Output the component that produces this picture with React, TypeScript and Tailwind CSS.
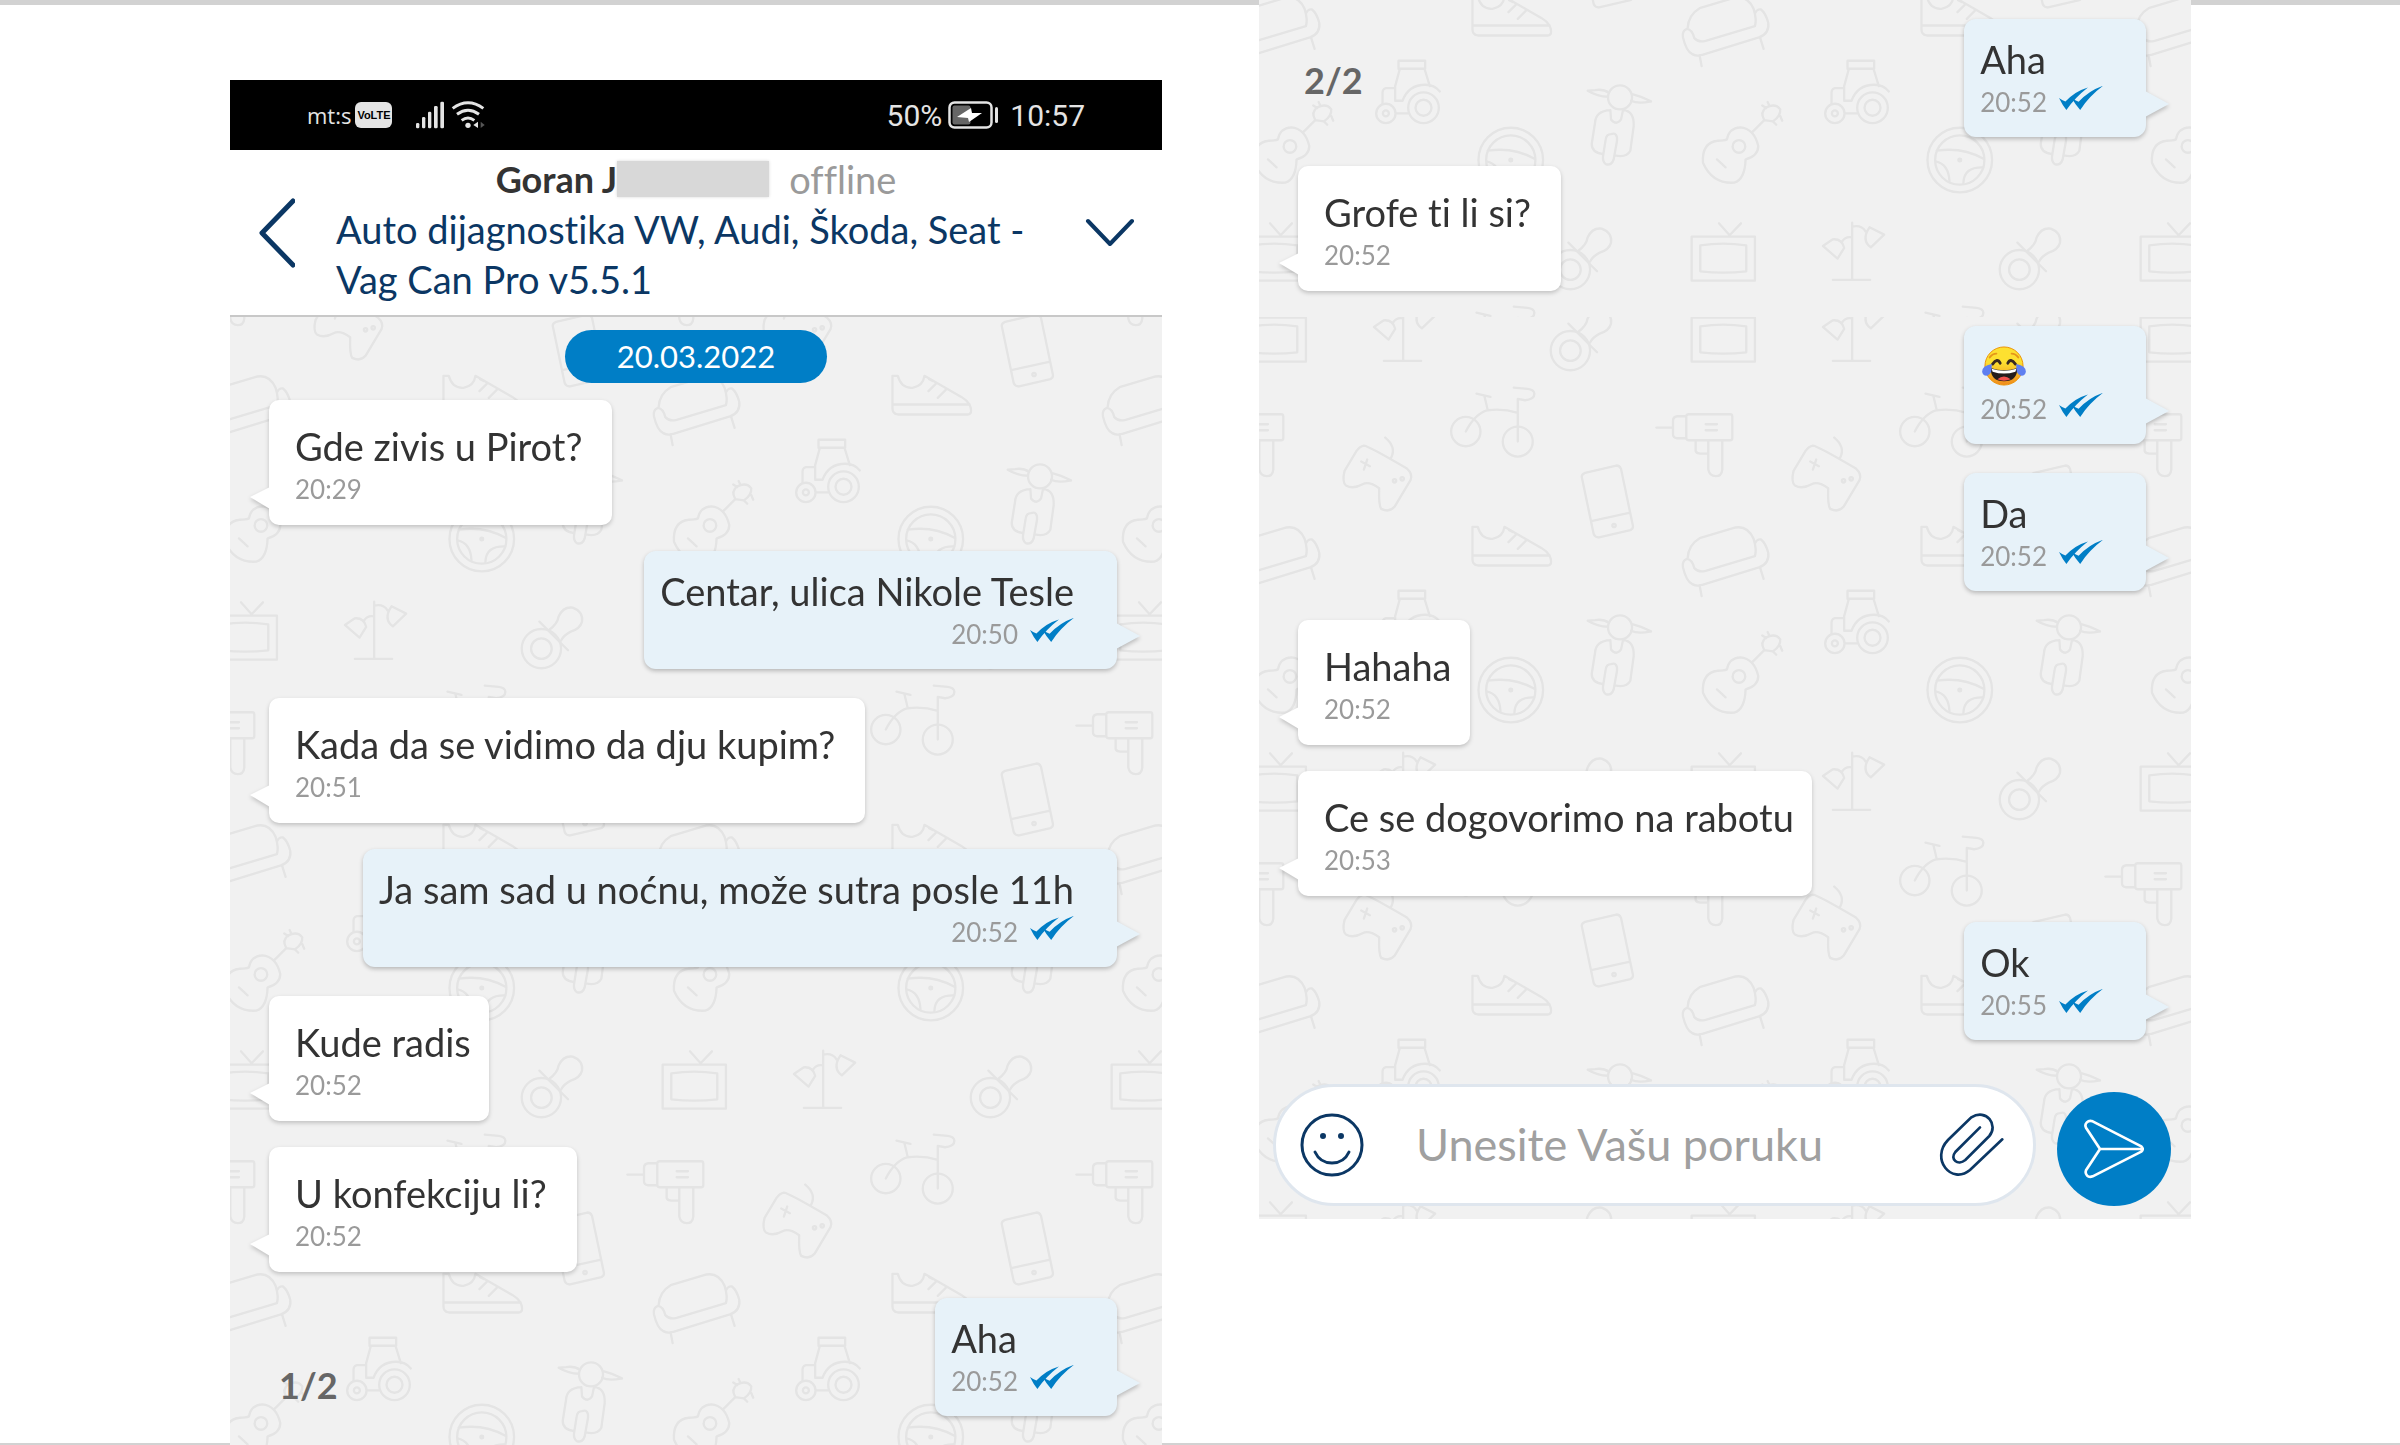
import { useId } from "react";
import type { ReactNode } from "react";

type Message = {
    from: "me" | "them";
    text: string;
    time: string;
    emoji?: boolean;
};

const firstMessages: Message[] = [
    { from: "them", text: "Gde zivis u Pirot?", time: "20:29" },
    { from: "me", text: "Centar, ulica Nikole Tesle", time: "20:50" },
    { from: "them", text: "Kada da se vidimo da dju kupim?", time: "20:51" },
    { from: "me", text: "Ja sam sad u noćnu, može sutra posle 11h", time: "20:52" },
    { from: "them", text: "Kude radis", time: "20:52" },
    { from: "them", text: "U konfekciju li?", time: "20:52" },
];

const secondMessages: Message[] = [
    { from: "me", text: "😂", time: "20:52", emoji: true },
    { from: "me", text: "Da", time: "20:52" },
    { from: "them", text: "Hahaha", time: "20:52" },
    { from: "them", text: "Ce se dogovorimo na rabotu", time: "20:53" },
    { from: "me", text: "Ok", time: "20:55" },
];

/* Repeating doodle wallpaper. The drawings use a 1348 unit tile, three units to a pixel */
function Wallpaper({ y }: { y: number }) {
    const id = useId();
    return (
        <svg className="absolute inset-0 h-full w-full" aria-hidden="true">
            <defs>
                <pattern
                    id={id}
                    width="449"
                    height="449"
                    patternUnits="userSpaceOnUse"
                    x="395"
                    y={y}
                    viewBox="-45 0 1348 1348"
                >
                    <g fill="none" stroke="#e4e4e4" strokeWidth="7" strokeLinejoin="round" strokeLinecap="round">
                        {/* tv */}
                        <path d="M68 74H258V206H68ZM94 100Q163 90 232 100V178Q163 186 94 178ZM150 34L182 70L216 34" />
                        {/* lamp */}
                        <path d="M550 32V204M492 204H604M550 76Q530 72 520 88M550 44Q578 38 590 58M462 102L492 82Q520 80 526 108L506 140ZM602 46L646 68L606 106Q576 84 602 46Z" />
                        {/* pacifier */}
                        <circle cx="1052" cy="173" r="59" />
                        <circle cx="1052" cy="173" r="31" />
                        <path d="M1046 92L1132 178M1074 118Q1100 100 1104 76Q1118 46 1146 50Q1178 62 1174 92Q1168 114 1140 122Q1120 132 1110 150" />
                        {/* drill */}
                        <path d="M-38 404H12M52 370H24Q12 372 12 384V424Q12 434 24 436H52M60 364H184Q190 364 190 370V436Q190 442 184 442H60Q52 442 52 436V370Q52 364 60 364ZM110 394H144M110 412H144M80 444V474Q82 482 94 482H118M118 444V530Q122 550 140 550Q158 550 160 530V444" />
                        {/* tricycle */}
                        <circle cx="738" cy="416" r="44" />
                        <circle cx="894" cy="446" r="45" />
                        <path d="M738 416Q766 362 804 352Q850 346 894 360M770 302L812 312M794 310L804 352M894 446V318L916 322Q944 320 944 302Q942 290 924 288L882 284" />
                        {/* gamepad */}
                        <path d="M432 458Q444 458 560 526Q580 544 572 562L524 642Q508 660 484 648Q476 636 478 586Q448 564 428 574Q400 590 378 578Q366 566 374 534L410 474Q420 460 432 458ZM496 434Q530 462 514 494M424 506L450 520M442 500L432 530" />
                        <circle cx="524" cy="564" r="5" />
                        <circle cx="547" cy="558" r="5" />
                        {/* phone */}
                        <path d="M1096 540L1190 518Q1200 518 1204 528L1240 700Q1240 708 1232 712L1138 734Q1126 734 1122 724L1086 552Q1086 544 1096 540ZM1118 684L1228 660" />
                        <circle cx="1183" cy="698" r="5" />
                        {/* sofa */}
                        <path d="M56 796Q58 756 92 736L200 704Q236 698 254 738Q264 770 258 790L110 834Q88 840 76 826Q70 800 54 798Q38 804 42 824Q52 866 70 874Q84 882 100 876L270 824Q302 812 298 780Q290 750 276 740Q264 738 258 752M92 878L98 910M274 826L284 858" />
                        {/* shoe */}
                        <path d="M758 702L774 702Q784 740 818 738Q850 732 854 702L966 766Q994 784 994 806Q994 818 984 818H774Q758 816 758 800ZM758 788H990M888 726L866 748M918 744L894 768M868 712L880 718" />
                        {/* tractor */}
                        <path d="M536 894H616V918H536ZM540 918L526 970V1014H548M614 918L630 970M526 976H498Q488 978 488 990V1024M548 1014Q566 966 616 966Q644 966 660 986M530 1052H566" />
                        <circle cx="498" cy="1052" r="29" />
                        <circle cx="498" cy="1052" r="9" />
                        <circle cx="611" cy="1035" r="46" />
                        <circle cx="611" cy="1035" r="24" />
                        {/* scooter */}
                        <circle cx="1201" cy="1004" r="36" />
                        <path d="M1104 984L1126 982Q1150 978 1168 990M1104 984Q1134 1002 1164 1002M1237 994Q1262 1000 1294 1016M1234 1014Q1254 1024 1294 1016M1172 1042Q1128 1044 1126 1080L1116 1144Q1116 1170 1150 1174M1172 1042L1174 1070Q1190 1090 1204 1070L1210 1042Q1244 1044 1242 1090L1232 1164Q1220 1186 1186 1178M1174 1114Q1194 1108 1192 1134L1182 1190Q1176 1210 1158 1204Q1148 1196 1150 1180L1158 1130Q1160 1114 1174 1114Z" />
                        {/* guitar */}
                        <circle cx="210" cy="1151" r="19" />
                        <path d="M174 1130Q180 1096 214 1094Q256 1098 268 1150Q268 1180 230 1190Q228 1250 196 1260Q130 1264 102 1200Q98 1140 146 1134Q166 1134 174 1130ZM144 1190L170 1214M250 1108L286 1072M286 1072Q272 1048 292 1034Q320 1020 334 1040Q336 1060 312 1076ZM280 1028L292 1036M296 1018L302 1030M334 1060L340 1074M312 1076L322 1086" />
                        {/* steering wheel */}
                        <circle cx="873" cy="1192" r="97" />
                        <circle cx="873" cy="1192" r="74" />
                        <circle cx="873" cy="1192" r="4" />
                        <path d="M804 1164Q880 1152 944 1188M800 1196Q840 1204 842 1256M944 1214Q884 1212 884 1262" />
                    </g>
                </pattern>
            </defs>
            <rect width="100%" height="100%" fill={`url(#${id})`} />
        </svg>
    );
}

function DoubleCheck() {
    return (
        <svg className="h-6 w-11 shrink-0" viewBox="469 114 137 74" fill="#007ec6" role="img" aria-label="Pročitano">
            <path d="M469 151Q480 159 489 162Q518 130 559 118Q518 150 492 188Q480 174 469 151Z" />
            <path d="M508 150Q520 159 530 163Q562 128 606 113Q562 146 535 188Q520 172 508 150Z" />
        </svg>
    );
}

function JoyFace() {
    return (
        <svg className="h-10 w-12" viewBox="0 0 48 42" role="img" aria-label="😂">
            <defs>
                <linearGradient id="joy" x1="0" y1="0" x2="0" y2="1">
                    <stop offset="0.4" stopColor="#fde030" />
                    <stop offset="1" stopColor="#f08a1c" />
                </linearGradient>
            </defs>
            <circle cx="24" cy="21" r="20" fill="url(#joy)" stroke="#eb8f00" />
            <path d="M9 12Q12 8 16 8M39 12Q36 8 32 8" fill="none" stroke="#e5961a" strokeWidth="2" strokeLinecap="round" />
            <path d="M12 19Q17 12 20 18M28 18Q31 12 36 19" fill="none" stroke="#3a2a20" strokeWidth="3" strokeLinecap="round" />
            <path d="M10 23Q24 28 38 23Q38 37 24 37Q10 37 10 23Z" fill="#241c1c" />
            <path d="M11 24Q24 28 37 24L36 27Q24 31 12 27Z" fill="#fff" />
            <path d="M17 35Q24 29 31 35Q24 38 17 35Z" fill="#f0504d" />
            <path d="M11 19Q12 29 7 31Q2 32 1 27Q1 21 11 19ZM37 19Q36 29 41 31Q46 32 47 27Q47 21 37 19Z" fill="#5f7ff0" />
        </svg>
    );
}

function Bubble({ message }: { message: Message }) {
    if (message.from === "them") {
        return (
            <div
                className={`relative w-fit self-start rounded-[10px] bg-white pt-[21px] pb-[18px] pl-[26px] drop-shadow-[0_2px_2px_rgba(0,0,0,0.2)] ${
                    message.text.endsWith("?") ? "pr-[30px]" : "pr-[18px]"
                }`}
            >
                <p className="text-[38px] leading-[50px] text-[#333]">{message.text}</p>
                <p className="text-[26px] leading-9 text-[#9a9a9a]">{message.time}</p>
                <svg className="absolute bottom-4 -left-[19px] h-[22px] w-5" viewBox="0 0 20 22" fill="#fff" aria-hidden="true">
                    <path d="M20 0V22L0 10Z" />
                </svg>
            </div>
        );
    }
    return (
        <div className="relative mb-[3px] flex w-fit flex-col self-end rounded-xl bg-[#e7f2f9] pt-[15px] pr-[43px] pb-[17px] pl-4 drop-shadow-[0_2px_2px_rgba(0,0,0,0.24)]">
            <div className="flex h-[50px] items-center text-[38px] leading-[50px] text-[#333]">
                {message.emoji ? <JoyFace /> : <p>{message.text}</p>}
            </div>
            <div className="flex items-start gap-3 self-end">
                <p className="text-[26px] leading-9 text-[#9a9a9a]">{message.time}</p>
                <span className="pt-0.5">
                    <DoubleCheck />
                </span>
            </div>
            <svg className="absolute -right-[23px] bottom-5 h-[26px] w-6" viewBox="0 0 24 26" fill="#e7f2f9" aria-hidden="true">
                <path d="M0 0V26L24 13Z" />
            </svg>
        </div>
    );
}

function Thread({ messages, children }: { messages: Message[]; children?: ReactNode }) {
    return (
        <div className="relative flex flex-col gap-[26px] pr-[45px] pl-[39px]">
            {messages.map((message, index) => (
                <Bubble key={index} message={message} />
            ))}
            {children}
        </div>
    );
}

function StatusBar() {
    return (
        <div className="flex h-[70px] items-center bg-black px-[77px] font-[Roboto,sans-serif] text-[#e4e4e4]">
            <span className="font-['Open_Sans',sans-serif] text-[22px]">mt:s</span>
            <span className="ml-1 flex h-[26px] w-[37px] items-center justify-center rounded-md bg-[#e4e4e4] font-['Liberation_Sans_Narrow','Liberation_Sans',sans-serif] text-[11px] font-bold text-black">
                VoLTE
            </span>
            <svg className="ml-6 h-7 w-[70px]" viewBox="384 32 210 84" fill="#e4e4e4" aria-hidden="true">
                <rect x="384" y="98" width="10" height="16" rx="4" />
                <rect x="402" y="80" width="10" height="34" rx="4" />
                <rect x="420" y="64" width="10" height="50" rx="4" />
                <rect x="438" y="47" width="11" height="67" rx="4" />
                <rect x="457" y="34" width="11" height="80" rx="4" />
                <g fill="none" stroke="#e4e4e4" strokeWidth="9">
                    <path d="M494 54Q540 20 586 54M507 72Q540 48 573 72M521 90Q540 76 559 90" />
                </g>
                <circle cx="540" cy="105" r="8" />
                <path d="M556 104L570 94V113Z" />
                <path d="M590 104L578 94V113Z" fill="#555" />
            </svg>
            <span className="ml-auto text-[30px]">50%</span>
            <svg className="ml-1.5 h-7 w-[52px]" viewBox="0 0 52 28" aria-hidden="true">
                <rect x="1.5" y="1.5" width="42" height="25" rx="5" fill="none" stroke="#e4e4e4" strokeWidth="2.5" />
                <rect x="4.5" y="4.5" width="18" height="19" rx="2" fill="#666" />
                <path d="M9 16L23 7L24 12L34 12L21 21L20 17Z" fill="#fff" />
                <rect x="47" y="6" width="3" height="16" rx="1.5" fill="#e4e4e4" />
            </svg>
            <span className="ml-2.5 text-[30px]">10:57</span>
        </div>
    );
}

function ChatHeader() {
    return (
        <header className="relative border-b-2 border-[#c8c8c8] bg-white pt-1 pb-[11px]">
            <div className="flex h-[50px] items-center justify-center text-[38px] leading-[50px]">
                <h1 className="text-4xl font-bold text-[#333]">Goran J</h1>
                <span className="h-9 w-[152px] bg-[#d8d8d8] shadow-[0_0_3px_#d8d8d8]" />
                <span className="ml-5 text-[#9a9a9a]">offline</span>
            </div>
            <div className="flex items-start">
                <button type="button" aria-label="Nazad" className="-mt-1.5 ml-[29px] flex w-[77px]">
                    <svg className="h-[70px] w-9" viewBox="0 0 36 70" fill="none" stroke="#0b3764" strokeWidth="5" strokeLinecap="round" strokeLinejoin="round">
                        <path d="M34 3L3 35L34 67" />
                    </svg>
                </button>
                <h2 className="flex-1 text-[38px] leading-[50px] text-[#0b3764]">
                    Auto dijagnostika VW, Audi, Škoda, Seat - Vag Can Pro v5.5.1
                </h2>
                <button type="button" aria-label="Detalji oglasa" className="mt-3.5 mr-[27px] ml-5">
                    <svg className="h-7 w-[50px]" viewBox="0 0 50 28" fill="none" stroke="#0b3764" strokeWidth="4" strokeLinecap="round" strokeLinejoin="round">
                        <path d="M3 3L25 26L47 3" />
                    </svg>
                </button>
            </div>
        </header>
    );
}

function Composer() {
    return (
        <form className="relative flex items-end pt-[41px] pr-5 pb-[13px] pl-3.5" onSubmit={(e) => e.preventDefault()}>
            <div className="flex h-[122px] min-w-0 flex-1 items-center rounded-full border-[3px] border-[#dfe6ee] bg-white pr-7 pl-6">
                <button type="button" aria-label="Emotikoni">
                    <svg className="size-[64px]" viewBox="0 0 64 64" fill="none" stroke="#0b3764" strokeWidth="3" strokeLinecap="round">
                        <circle cx="32" cy="32" r="30" />
                        <circle cx="23" cy="23" r="1.5" fill="#0b3764" />
                        <circle cx="41" cy="23" r="1.5" fill="#0b3764" />
                        <path d="M15 39Q20 50 32 50Q44 50 49 39" />
                    </svg>
                </button>
                <input
                    type="text"
                    aria-label="Unesite Vašu poruku"
                    placeholder="Unesite Vašu poruku"
                    className="ml-[52px] min-w-0 flex-1 text-[45px] outline-none placeholder:text-[#a0a0a0]"
                />
                <button type="button" aria-label="Dodaj prilog">
                    <svg className="size-[66px]" viewBox="115 486 198 198" fill="none" stroke="#0b3764" strokeWidth="8" strokeLinecap="round">
                        <path d="M238 532L164 606C146 628 172 648 194 630L266 558C294 526 258 474 212 502L142 570C88 626 152 706 208 660L305 568" />
                    </svg>
                </button>
            </div>
            <button type="submit" aria-label="Pošalji" className="ml-[21px] flex size-[114px] shrink-0 items-center justify-center rounded-full bg-[#007ec6]">
                <svg className="size-[60px]" viewBox="550 504 180 180" fill="none" stroke="#fff" strokeWidth="8" strokeLinejoin="round">
                    <path d="M576 511L722 586Q730 594 722 602L576 676C562 682 552 670 556 658L598 594L556 530C550 518 562 506 576 511ZM598 594H724" />
                </svg>
            </button>
        </form>
    );
}

export default function App() {
    return (
        <main className="grid min-h-screen grid-cols-[minmax(0,230fr)_minmax(0,932fr)_minmax(0,97fr)_minmax(0,932fr)_minmax(0,209fr)] border-t-[5px] border-b-[3px] border-[#d2d2d2] bg-white font-[Lato,sans-serif] [font-variant-ligatures:none]">
            {/* First screen */}
            <section className="col-start-2 mt-[75px] -mb-[3px] flex flex-col">
                <StatusBar />
                <ChatHeader />
                <div className="relative flex flex-1 flex-col bg-[#f1f1f1] pt-[13px] pb-[27px]">
                    <Wallpaper y={723} />
                    <p className="relative mb-[17px] self-center rounded-full bg-[#007ec6] px-[52px] text-[31px] leading-[53px] text-white">
                        20.03.2022
                    </p>
                    <Thread messages={firstMessages}>
                        <div className="flex items-start justify-between pl-2.5">
                            <p className="mt-[62px] text-4xl leading-[50px] font-bold text-[#666]">1/2</p>
                            <Bubble message={{ from: "me", text: "Aha", time: "20:52" }} />
                        </div>
                    </Thread>
                </div>
            </section>

            {/* Second screen, stitched from two captures */}
            <section className="col-start-4 -mt-[5px]">
                <div className="relative bg-[#f1f1f1] pt-[19px] pb-[26px]">
                    <Wallpaper y={212} />
                    <Thread messages={[]}>
                        <div className="flex items-start justify-between pl-1.5">
                            <p className="mt-9 text-4xl leading-[50px] font-bold text-[#666]">2/2</p>
                            <Bubble message={{ from: "me", text: "Aha", time: "20:52" }} />
                        </div>
                        <Bubble message={{ from: "them", text: "Grofe ti li si?", time: "20:52" }} />
                    </Thread>
                </div>
                <div className="relative bg-[#f1f1f1] pt-[9px]">
                    <Wallpaper y={425} />
                    <Thread messages={secondMessages} />
                    <Composer />
                </div>
            </section>
        </main>
    );
}
